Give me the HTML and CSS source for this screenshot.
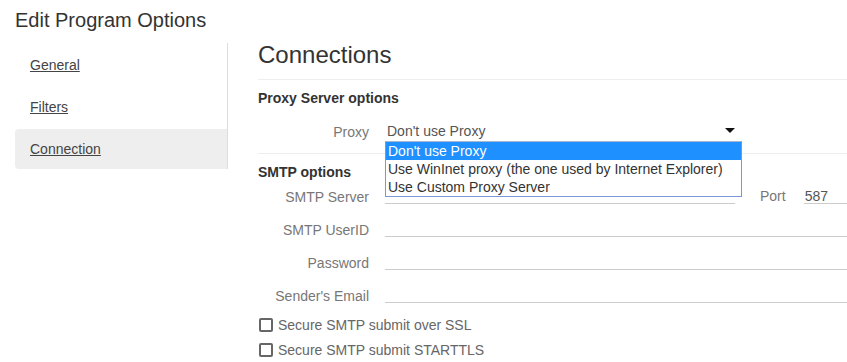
FILE: index.html
```html
<!DOCTYPE html>
<html>
<head>
<meta charset="utf-8">
<link rel="stylesheet" href="styles.css">
</head>
<body>
<h1 class="title">Edit Program Options</h1>
<div class="layout">
  <nav class="nav">
    <a class="nav-item" href="#">General</a>
    <a class="nav-item" href="#">Filters</a>
    <a class="nav-item active" href="#">Connection</a>
  </nav>
  <main class="main">
    <div class="page-header"><h2>Connections</h2></div>

    <h4 class="section first">Proxy Server options</h4>
    <div class="row proxy-row">
      <label class="lbl proxy-lbl">Proxy</label>
      <div class="select-wrap">
        <div class="select">
          <span>Don't use Proxy</span>
          <span class="caret"></span>
        </div>
        <ul class="dropdown">
          <li class="opt selected">Don't use Proxy</li>
          <li class="opt">Use WinInet proxy (the one used by Internet Explorer)</li>
          <li class="opt">Use Custom Proxy Server</li>
        </ul>
      </div>
    </div>
    <div class="divider"></div>

    <h4 class="section">SMTP options</h4>
    <div class="row first-row">
      <label class="lbl">SMTP Server</label>
      <div class="input server"></div>
      <label class="port-lbl">Port</label>
      <div class="input port">587</div>
    </div>
    <div class="row">
      <label class="lbl">SMTP UserID</label>
      <div class="input grow"></div>
    </div>
    <div class="row">
      <label class="lbl">Password</label>
      <div class="input grow"></div>
    </div>
    <div class="row">
      <label class="lbl">Sender's Email</label>
      <div class="input grow"></div>
    </div>

    <div class="check first-check"><span class="box"></span>Secure SMTP submit over SSL</div>
    <div class="check"><span class="box"></span>Secure SMTP submit STARTTLS</div>
  </main>
</div>
</body>
</html>
```
FILE: styles.css
```css
html, body {
  margin: 0;
  padding: 0;
  overflow: hidden;
  background: #fff;
}
body {
  padding-left: 15px;
  font-family: "Liberation Sans", Arial, sans-serif;
  font-size: 14px;
  color: #333;
}
.title {
  margin: 9px 0 0;
  font-size: 20px;
  line-height: 22px;
  font-weight: normal;
  color: #333;
}
.layout {
  display: flex;
  align-items: flex-start;
  margin-top: 12px;
}
.nav {
  width: 212px;
  flex: none;
  border-right: 1px solid #ddd;
  padding-top: 2px;
  display: flex;
  flex-direction: column;
  gap: 2px;
}
.nav-item {
  display: block;
  padding: 10px 15px;
  line-height: 20px;
  color: #444;
  text-decoration: underline;
  border-radius: 4px 0 0 4px;
}
.nav-item.active {
  background: #eee;
}
.main {
  flex: 1;
  margin-left: 30px;
  min-width: 0;
}
.page-header {
  border-bottom: 1px solid #eee;
  padding-bottom: 12px;
}
.page-header h2 {
  margin: 0;
  font-size: 24px;
  line-height: 24px;
  font-weight: normal;
  color: #333;
}
.section {
  margin: 8px 0 0;
  font-size: 14px;
  line-height: 20px;
  font-weight: bold;
  color: #333;
}
.row {
  display: flex;
  align-items: flex-start;
  height: 21px;
  margin-top: 12px;
}
.proxy-row {
  margin-top: 13px;
}
.first-row {
  margin-top: 1px;
}
.lbl {
  width: 111px;
  flex: none;
  text-align: right;
  line-height: 20px;
  padding-top: 4px;
  color: #777;
  margin-right: 16px;
}
.lbl.proxy-lbl {
  padding-top: 1px;
}
.select-wrap {
  position: relative;
  width: 357px;
}
.select {
  height: 20px;
  line-height: 20px;
  border-bottom: 1px solid #ccc;
  color: #555;
  padding-left: 2px;
  display: flex;
  justify-content: space-between;
  align-items: center;
}
.caret {
  width: 0;
  height: 0;
  border-left: 5px solid transparent;
  border-right: 5px solid transparent;
  border-top: 5px solid #111;
  margin-right: 7px;
  margin-top: -2px;
}
.dropdown {
  position: absolute;
  left: 0;
  top: 20px;
  width: 357px;
  box-sizing: border-box;
  margin: 0;
  padding: 0;
  list-style: none;
  background: #fff;
  border: 1px solid #7b98d6;
  border-top-color: #a9b6cf;
  z-index: 2;
}
.opt {
  height: 18px;
  line-height: 18px;
  padding-left: 2px;
  color: #333;
  white-space: nowrap;
}
.opt.selected {
  background: #1e90ff;
  color: #fff;
}
.divider {
  border-bottom: 1px solid #eee;
  margin-top: 11px;
}
.input {
  height: 17px;
  padding-top: 3px;
  line-height: 20px;
  border-bottom: 1px solid #ccc;
  color: #555;
  padding-left: 1px;
  box-sizing: content-box;
}
.input.server {
  width: 349px;
}
.input.grow {
  flex: 1;
}
.port-lbl {
  line-height: 20px;
  padding-top: 3px;
  color: #777;
  margin-left: 25px;
  margin-right: 18px;
}
.input.port {
  flex: 1;
}
.check {
  display: flex;
  align-items: center;
  height: 20px;
  margin-top: 5px;
  color: #666;
}
.first-check {
  margin-top: 12px;
}
.box {
  width: 10px;
  height: 10px;
  border: 2px solid #666;
  border-radius: 2px;
  margin: 0 5px 0 1px;
  flex: none;
}
```
